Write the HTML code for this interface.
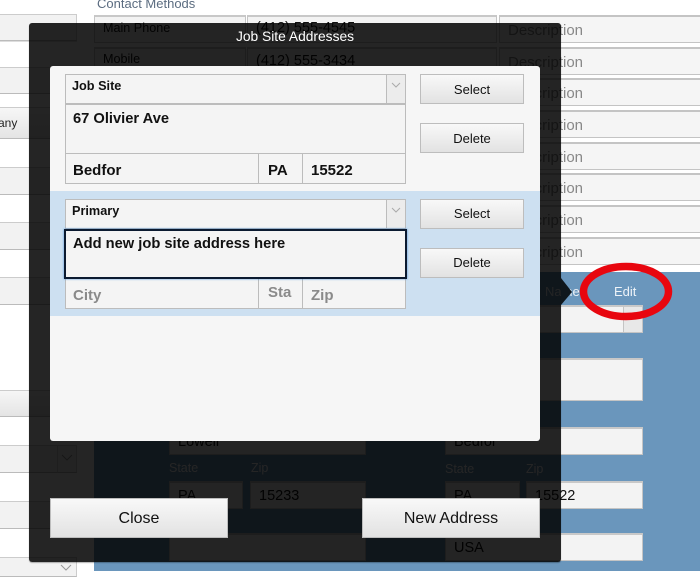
<!DOCTYPE html>
<html><head><meta charset="utf-8">
<style>
html,body{margin:0;padding:0}
body{width:700px;height:573px;overflow:hidden;position:relative;background:#fff;font-family:"Liberation Sans",sans-serif;filter:blur(.3px)}
div{position:absolute;box-sizing:border-box;white-space:nowrap}
.i{background:#f3f3f3;border:1px solid #c4c4c4;border-top:2px solid #c8c8c8;color:#111;font-size:14.5px;padding-left:8px}
.g{background:#f2f2f2;border-bottom:1px solid #bbb;border-top:1px solid #ccc}
.d{color:#888;font-size:15px;line-height:27px;padding-left:8px;background:#f5f5f5;border:1px solid #c4c4c4;border-top:2px solid #c4c4c4;border-right:0}
.f{background:#f4f4f4;border:1px solid #bcbcbc;color:#111;font-weight:bold;font-size:15px;padding-left:7px}
.s{font-size:12.7px;line-height:22px;padding-left:6px}
.t{font-size:14.7px}
.b{background:linear-gradient(#f8f8f8,#e2e2e2);border:1px solid #bdbdbd;text-align:center;color:#111;font-size:13px;line-height:29px}
.l{color:#fff;font-size:12.5px}
</style></head><body>
<div style="left:97px;top:-3px;font-size:13px;color:#5b6c80;line-height:14px">Contact Methods</div>

<div class="g" style="left:0;top:14px;width:77px;height:27px;border-right:1px solid #ccc"></div>
<div class="g" style="left:0;top:67px;width:77px;height:27px;border-right:1px solid #ccc"></div>
<div class="g" style="left:0;top:107px;width:77px;height:32px;background:linear-gradient(#f6f6f6,#e4e4e4);font-size:12px;line-height:30px;color:#222;border-right:1px solid #ccc;text-indent:-2px">any</div>
<div class="g" style="left:0;top:167px;width:77px;height:28px;border-right:1px solid #ccc"></div>
<div class="g" style="left:0;top:222px;width:77px;height:28px;border-right:1px solid #ccc"></div>
<div class="g" style="left:0;top:277px;width:77px;height:28px;border-right:1px solid #ccc"></div>
<div class="g" style="left:0;top:390px;width:77px;height:27px;background:linear-gradient(#f6f6f6,#e4e4e4)"></div>
<div class="g" style="left:0;top:445px;width:77px;height:28px"></div>
<div class="g" style="left:57px;top:445px;width:20px;height:28px;border-left:1px solid #ccc;border-right:1px solid #ccc"></div>
<svg style="position:absolute;left:59px;top:453px" width="16" height="10"><path d="M3 2l5 5 5-5" fill="none" stroke="#999" stroke-width="1"/></svg>
<div class="g" style="left:0;top:501px;width:77px;height:28px"></div>
<div class="g" style="left:0;top:557px;width:77px;height:20px;border-right:1px solid #ccc"></div>
<svg style="position:absolute;left:58px;top:563px" width="16" height="10"><path d="M3 2l5 5 5-5" fill="none" stroke="#999" stroke-width="1"/></svg>
<div style="left:0;top:41px;width:77px;height:0;border-top:1px solid #ddd"></div>

<div class="i" style="left:94px;top:15px;width:152px;height:28px;line-height:22px;font-size:12.6px;padding-left:8px">Main Phone</div>
<div class="i" style="left:94px;top:47px;width:152px;height:28px;line-height:21px;font-size:12.6px;padding-left:8px">Mobile</div>
<div class="i" style="left:247px;top:15px;width:250px;height:28px;line-height:23px">(412) 555-4545</div>
<div class="i" style="left:247px;top:47px;width:250px;height:28px;line-height:25px">(412) 555-3434</div>
<div class="d" style="left:499px;top:15px;width:201px;height:28px">Description</div>
<div class="d" style="left:499px;top:47px;width:201px;height:28px">Description</div>
<div class="d" style="left:499px;top:78px;width:201px;height:28px">Description</div>
<div class="d" style="left:499px;top:110px;width:201px;height:28px">Description</div>
<div class="d" style="left:499px;top:142px;width:201px;height:28px">Description</div>
<div class="d" style="left:499px;top:173px;width:201px;height:28px">Description</div>
<div class="d" style="left:499px;top:205px;width:201px;height:28px">Description</div>
<div class="d" style="left:499px;top:237px;width:201px;height:28px">Description</div>

<div style="left:94px;top:272px;width:606px;height:299px;background:#6a96bc"></div>
<div style="left:545px;top:284px;font-size:13px;color:#eef3f8;line-height:16px">Name</div>
<div style="left:614px;top:284px;font-size:13px;color:#eef3f8;line-height:16px">Edit</div>
<div class="i" style="left:445px;top:305px;width:179px;height:28px"></div>
<div class="i" style="left:623px;top:305px;width:20px;height:28px;background:#e8e8e8"></div>
<div class="i" style="left:445px;top:358px;width:198px;height:43px;line-height:26px">e</div>
<div class="i" style="left:169px;top:427px;width:197px;height:28px;line-height:27px">Lowell</div>
<div class="i" style="left:445px;top:427px;width:198px;height:28px;line-height:27px">Bedfor</div>
<div class="l" style="left:169px;top:461px;">State</div>
<div class="l" style="left:251px;top:461px;">Zip</div>
<div class="l" style="left:445px;top:462px;">State</div>
<div class="l" style="left:526px;top:462px;">Zip</div>
<div class="i" style="left:169px;top:481px;width:74px;height:28px;line-height:26px">PA</div>
<div class="i" style="left:250px;top:481px;width:116px;height:28px;line-height:26px">15233</div>
<div class="i" style="left:445px;top:481px;width:75px;height:28px;line-height:26px">PA</div>
<div class="i" style="left:526px;top:481px;width:117px;height:28px;line-height:26px">15522</div>
<div class="i" style="left:169px;top:533px;width:197px;height:28px"></div>
<div class="i" style="left:445px;top:533px;width:198px;height:28px;line-height:26px">USA</div>

<!-- overlay -->
<div style="left:29px;top:23px;width:532px;height:539px;background:rgba(0,0,0,.855);border-radius:3px;box-shadow:0 1px 1px rgba(0,0,0,.3)"></div>
<svg style="position:absolute;left:561px;top:278px" width="16" height="30"><path d="M0 0L11 14 0 27Z" fill="#0f171d"/></svg>
<svg style="position:absolute;left:570px;top:255px" width="120" height="80"><ellipse cx="56" cy="36.5" rx="42.5" ry="25" fill="none" stroke="#e8060f" stroke-width="7.5"/></svg>
<div style="left:29px;top:29px;width:532px;text-align:center;color:#fff;font-size:13.8px;line-height:16px">Job Site Addresses</div>

<div style="left:50px;top:66px;width:490px;height:375px;background:#f6f6f6;border-radius:3px"></div>
<div style="left:50px;top:191px;width:490px;height:125px;background:#cde0f1"></div>

<div class="f s" style="left:65px;top:74px;width:322px;height:30px">Job Site</div>
<div class="f" style="left:386px;top:74px;width:20px;height:30px;background:#ececec;padding:0"></div>
<svg style="position:absolute;left:389px;top:81px" width="14" height="10"><path d="M3 2l4 4 4-4" fill="none" stroke="#aaa"/></svg>
<div class="f t" style="left:65px;top:104px;width:341px;height:50px;line-height:29px">67 Olivier Ave</div>
<div class="f" style="left:65px;top:153px;width:194px;height:31px;line-height:33px">Bedfor</div>
<div class="f" style="left:258px;top:153px;width:45px;height:31px;line-height:33px;padding-left:9px">PA</div>
<div class="f" style="left:302px;top:153px;width:104px;height:31px;line-height:33px;padding-left:8px">15522</div>
<div class="b" style="left:420px;top:74px;width:104px;height:30px">Select</div>
<div class="b" style="left:420px;top:123px;width:104px;height:30px">Delete</div>

<div class="f s" style="left:65px;top:199px;width:322px;height:30px">Primary</div>
<div class="f" style="left:386px;top:199px;width:20px;height:30px;background:#ececec;padding:0"></div>
<svg style="position:absolute;left:389px;top:206px" width="14" height="10"><path d="M3 2l4 4 4-4" fill="none" stroke="#aaa"/></svg>
<div class="f t" style="left:64px;top:229px;width:343px;height:50px;border:2px solid #0b1a30;box-shadow:0 0 2px #4a90d9;line-height:27px;z-index:2">Add new job site address here</div>
<div class="f" style="left:65px;top:278px;width:194px;height:31px;color:#8a8a8a;line-height:33px">City</div>
<div class="f" style="left:258px;top:278px;width:45px;height:31px;color:#8a8a8a;line-height:28px;padding-left:9px">Sta</div>
<div class="f" style="left:302px;top:278px;width:104px;height:31px;color:#8a8a8a;line-height:33px;padding-left:8px">Zip</div>
<div class="b" style="left:420px;top:199px;width:104px;height:30px;line-height:28px">Select</div>
<div class="b" style="left:420px;top:248px;width:104px;height:30px;line-height:28px">Delete</div>

<div class="b" style="left:50px;top:498px;width:178px;height:40px;font-size:16px;line-height:39px">Close</div>
<div class="b" style="left:362px;top:498px;width:178px;height:40px;font-size:16px;line-height:39px">New Address</div>
</body></html>
